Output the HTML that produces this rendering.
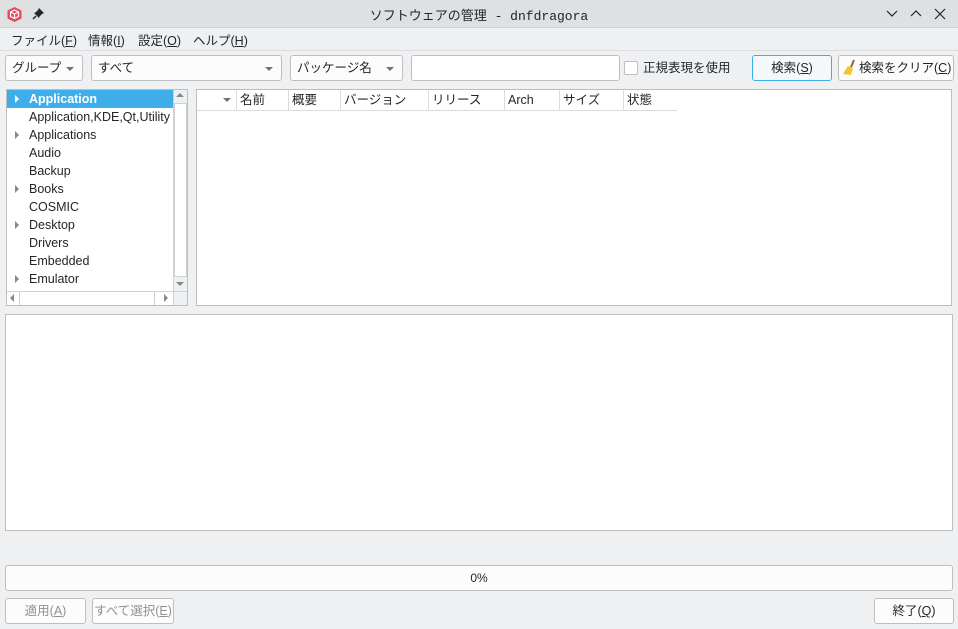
<!DOCTYPE html><html><head><meta charset="utf-8"><style>
*{box-sizing:border-box;margin:0;padding:0}
body{width:958px;height:629px;background:#eff0f1;font-family:"Liberation Sans","Noto Sans CJK JP",sans-serif;font-size:12.5px;color:#232629;position:relative;overflow:hidden}
.a{position:absolute}
.box{position:absolute;border:1px solid #bcbebf;border-radius:3px;background:#fcfcfc}
.w{background:#fff}
.cb{position:absolute;border:1px solid #bcbebf;border-radius:3px;background:#fcfcfc;padding-left:6px;line-height:24px}
.dd{position:absolute;right:8px;top:11px;width:0;height:0;border-left:4px solid transparent;border-right:4px solid transparent;border-top:4px solid #6e7175}
.row{position:absolute;left:1px;width:166px;height:18px;line-height:18px;padding-left:22px;white-space:nowrap;overflow:hidden}
.tri{position:absolute;left:8px;top:5px;border-top:4px solid transparent;border-bottom:4px solid transparent;border-left:4px solid #7f8c8d}
.th{position:absolute;top:90px;height:21px;line-height:21px;border-right:1px solid #dcdcdc;border-bottom:1px solid #dcdcdc;padding-left:3px;background:#fff}
.btn{position:absolute;border:1px solid #bcbebf;border-radius:3px;background:#fcfcfc;text-align:center;line-height:24px}
</style></head><body>
<div class="a" style="left:0;top:0;width:958px;height:28px;background:#dee0e2;border-bottom:1px solid #d0d2d4"></div>
<svg class="a" style="left:6px;top:6px" width="17" height="17" viewBox="0 0 17 17"><path d="M8.5 1L15.5 4.5V12.5L8.5 16L1.5 12.5V4.5Z" fill="#e9475a"/><path d="M8.5 4L12.5 6V10.5L8.5 12.5L4.5 10.5V6Z" fill="none" stroke="#fff" stroke-width="1.2"/><path d="M4.5 6L8.5 8L12.5 6M8.5 8V12.5" fill="none" stroke="#fff" stroke-width="1.2"/></svg>
<svg class="a" style="left:32px;top:7px" width="13" height="13" viewBox="0 0 13 13"><path d="M7 1L12 6L10 7L7.5 9.5L7 11L2 6L3.5 5.5L6 3Z" fill="#232629"/><path d="M4 9L1 12" stroke="#232629" stroke-width="1.5"/></svg>
<div class="a" style="left:0;width:958px;top:5px;text-align:center;font-size:13px;font-family:'Liberation Mono','Noto Sans CJK JP',monospace">ソフトウェアの管理 - dnfdragora</div>
<svg class="a" style="left:886px;top:8px" width="64" height="12" viewBox="0 0 64 12"><path d="M1 3L6 8L11 3M25 8L30 3L35 8M49 1L59 11M59 1L49 11" fill="none" stroke="#232629" stroke-width="1.2"/></svg>
<div class="a" style="left:11px;top:30px">ファイル(<u>F</u>)</div>
<div class="a" style="left:88px;top:30px">情報(<u>I</u>)</div>
<div class="a" style="left:138px;top:30px">設定(<u>O</u>)</div>
<div class="a" style="left:193px;top:30px">ヘルプ(<u>H</u>)</div>
<div class="a" style="left:0;top:50px;width:958px;height:1px;background:#dcdde0"></div>
<div class="cb" style="left:5px;top:55px;width:78px;height:26px">グループ<span class="dd"></span></div>
<div class="cb" style="left:91px;top:55px;width:191px;height:26px">すべて<span class="dd"></span></div>
<div class="cb" style="left:290px;top:55px;width:113px;height:26px">パッケージ名<span class="dd"></span></div>
<div class="box w" style="left:411px;top:55px;width:209px;height:26px"></div>
<div class="a" style="left:624px;top:61px;width:14px;height:14px;border:1px solid #bcbebf;border-radius:2px;background:#fff"></div>
<div class="a" style="left:643px;top:59px;line-height:18px">正規表現を使用</div>
<div class="btn" style="left:752px;top:55px;width:80px;height:26px;border-color:#3daee9;background:#f4f8fb">検索(<u>S</u>)</div>
<div class="btn" style="left:838px;top:55px;width:116px;height:26px;text-align:left;padding-left:20px">検索をクリア(<u>C</u>)</div>
<svg class="a" style="left:842px;top:59px" width="16" height="18" viewBox="0 0 16 18"><path d="M12 1L9 8" stroke="#8a6a3a" stroke-width="2"/><path d="M6 7L11 9L9 16L1 15Z" fill="#f2c530"/></svg>
<div class="a w" style="left:6px;top:89px;width:182px;height:217px;border:1px solid #bcbebf"></div>
<div class="row" style="left:7px;top:90px;background:#3daee9;color:#fff;font-weight:bold"><span class="tri" style="border-left-color:#fff"></span>Application</div>
<div class="row" style="left:7px;top:108px">Application,KDE,Qt,Utility</div>
<div class="row" style="left:7px;top:126px"><span class="tri"></span>Applications</div>
<div class="row" style="left:7px;top:144px">Audio</div>
<div class="row" style="left:7px;top:162px">Backup</div>
<div class="row" style="left:7px;top:180px"><span class="tri"></span>Books</div>
<div class="row" style="left:7px;top:198px">COSMIC</div>
<div class="row" style="left:7px;top:216px"><span class="tri"></span>Desktop</div>
<div class="row" style="left:7px;top:234px">Drivers</div>
<div class="row" style="left:7px;top:252px">Embedded</div>
<div class="row" style="left:7px;top:270px"><span class="tri"></span>Emulator</div>
<div class="a" style="left:173px;top:90px;width:14px;height:201px;background:#eff0f1;border-left:1px solid #d0d0d0"></div>
<div class="a" style="left:174px;top:103px;width:13px;height:174px;background:#fff;border:1px solid #d0d0d0"></div>
<div class="a" style="left:176px;top:93px;border-left:4px solid transparent;border-right:4px solid transparent;border-bottom:4px solid #7f8c8d"></div>
<div class="a" style="left:176px;top:282px;border-left:4px solid transparent;border-right:4px solid transparent;border-top:4px solid #7f8c8d"></div>
<div class="a" style="left:7px;top:291px;width:166px;height:14px;background:#fff;border-top:1px solid #d0d0d0"></div>
<div class="a" style="left:19px;top:291px;width:136px;height:14px;border-left:1px solid #d0d0d0;border-right:1px solid #d0d0d0"></div>
<div class="a" style="left:10px;top:294px;border-top:4px solid transparent;border-bottom:4px solid transparent;border-right:4px solid #7f8c8d"></div>
<div class="a" style="left:164px;top:294px;border-top:4px solid transparent;border-bottom:4px solid transparent;border-left:4px solid #7f8c8d"></div>
<div class="a" style="left:173px;top:291px;width:14px;height:14px;background:#eff0f1;border-left:1px solid #d0d0d0;border-top:1px solid #d0d0d0"></div>
<div class="a w" style="left:196px;top:89px;width:756px;height:217px;border:1px solid #bcbebf"></div>
<div class="th" style="left:197px;width:40px"><span class="a" style="left:26px;top:8px;border-left:4px solid transparent;border-right:4px solid transparent;border-top:4px solid #6e7175"></span></div>
<div class="th" style="left:237px;width:52px">名前</div>
<div class="th" style="left:289px;width:52px">概要</div>
<div class="th" style="left:341px;width:88px">バージョン</div>
<div class="th" style="left:429px;width:76px">リリース</div>
<div class="th" style="left:505px;width:55px">Arch</div>
<div class="th" style="left:560px;width:64px">サイズ</div>
<div class="th" style="left:624px;width:53px;border-right:none">状態</div>
<div class="a w" style="left:5px;top:314px;width:948px;height:217px;border:1px solid #bcbebf"></div>
<div class="box" style="left:5px;top:565px;width:948px;height:26px;text-align:center;line-height:24px;font-size:12px">0%</div>
<div class="btn" style="left:5px;top:598px;width:81px;height:26px;color:#8e9194">適用(<u>A</u>)</div>
<div class="btn" style="left:92px;top:598px;width:82px;height:26px;color:#8e9194">すべて選択(<u>E</u>)</div>
<div class="btn" style="left:874px;top:598px;width:80px;height:26px">終了(<u>Q</u>)</div>
</body></html>
